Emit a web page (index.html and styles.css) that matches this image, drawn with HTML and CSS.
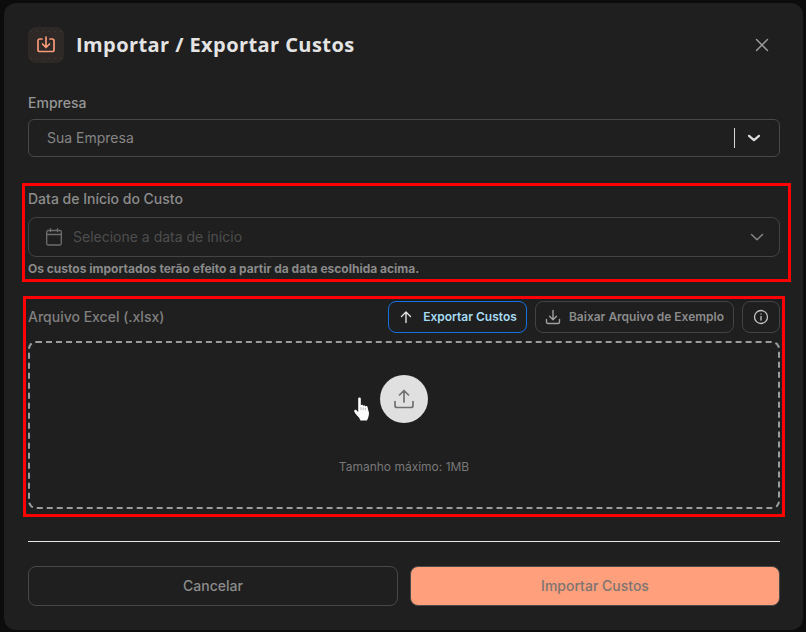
FILE: index.html
```html
<!DOCTYPE html>
<html lang="en">

<head>
    <meta charset="UTF-8" />
    <title>Importar / Exportar Custos</title>
    <link rel="stylesheet" href="styles.css">
</head>

<body>
    <div class="modal">
        <div class="modal-header">
            <div class="header-icon">
                <svg width="20" height="20" viewBox="0 0 20 20" fill="none" stroke="#f79a78" stroke-width="1.700" stroke-linecap="round" stroke-linejoin="round">
                    <path d="M6 4H3.800C2.800 4 2 4.800 2 5.800v8.900c0 1 .8 1.800 1.800 1.800h12.400c1 0 1.800-.8 1.800-1.800V5.800c0-1-.8-1.800-1.800-1.800H14" />
                    <path d="M10 2v10.500M6.500 9l3.500 3.500L13.500 9" />
                </svg>
            </div>
            <h1>Importar / Exportar Custos</h1>
            <button class="close-btn" aria-label="Fechar">
                <svg width="14" height="14" viewBox="0 0 14 14" fill="none" stroke="#a0a0a0" stroke-width="1.400" stroke-linecap="round">
                    <path d="M1.500 1.500l11 11M12.500 1.500l-11 11" />
                </svg>
            </button>
        </div>

        <div class="field-empresa">
            <label class="field-label">Empresa</label>
            <div class="select-box">
                <span class="select-value">Sua Empresa</span>
                <span class="select-sep"></span>
                <svg class="select-arrow" width="14" height="14" viewBox="0 0 14 14" fill="none" stroke="#dcdcdc" stroke-width="2.200" stroke-linecap="round" stroke-linejoin="round">
                    <path d="M2 4.800l5 4.400 5-4.400" />
                </svg>
            </div>
        </div>

        <div class="field-date marked">
            <label class="field-label">Data de Início do Custo</label>
            <div class="date-box">
                <svg width="18" height="18" viewBox="0 0 18 18" fill="none" stroke="#6e6e6e" stroke-width="1.300" stroke-linecap="round">
                    <rect x="1.700" y="2.500" width="14.600" height="14.500" rx="1.500" />
                    <path d="M1.700 6.500h14.600M5.500 .7v3M12.500 .7v3" />
                </svg>
                <span class="date-placeholder">Selecione a data de início</span>
                <svg width="16" height="16" viewBox="0 0 16 16" fill="none" stroke="#8a8a8a" stroke-width="1.400" stroke-linecap="round" stroke-linejoin="round">
                    <path d="M2.500 5.500L8 10.800l5.500-5.300" />
                </svg>
            </div>
            <p class="hint">Os custos importados terão efeito a partir da data escolhida acima.</p>
        </div>

        <div class="field-file marked">
            <div class="file-top">
                <label class="file-label">Arquivo Excel (.xlsx)</label>
                <button class="btn-sm btn-export">
                    <svg width="16" height="16" viewBox="0 0 16 16" fill="none" stroke="#e2e2e2" stroke-width="1.400" stroke-linecap="round" stroke-linejoin="round">
                        <path d="M8 13.500V3M3.500 7.500L8 3l4.500 4.500" />
                    </svg>
                    Exportar Custos
                </button>
                <button class="btn-sm btn-sample">
                    <svg width="16" height="16" viewBox="0 0 16 16" fill="none" stroke="#a0a0a0" stroke-width="1.400" stroke-linecap="round" stroke-linejoin="round">
                        <path d="M8 1.500v9M4.500 7.200L8 10.700l3.500-3.500M1.500 10.500v2.500c0 .8.700 1.500 1.500 1.500h10c.8 0 1.500-.7 1.500-1.500v-2.500" />
                    </svg>
                    Baixar Arquivo de Exemplo
                </button>
                <button class="btn-sm btn-info" aria-label="Informações">
                    <svg width="16" height="16" viewBox="0 0 16 16" fill="none" stroke="#c4c4c4" stroke-width="1.300" stroke-linecap="round">
                        <circle cx="8" cy="8" r="6.500" />
                        <path d="M8 7.500v3.500M8 5v.1" />
                    </svg>
                </button>
            </div>
            <div class="dropzone">
                <div class="upload-circle">
                    <svg width="22" height="22" viewBox="0 0 22 22" fill="none" stroke="#707070" stroke-width="1.700" stroke-linecap="round" stroke-linejoin="round">
                        <path d="M11 14V2.500M6.500 7L11 2.500 15.500 7M2 13.500v4c0 1 .9 2 2 2h14c1.100 0 2-1 2-2v-4" />
                    </svg>
                </div>
                <span class="dropzone-text">Tamanho máximo: 1MB</span>
                <svg class="cursor-hand" width="16" height="24" viewBox="0 0 16 24">
                    <path d="M4.200 1.500C4.200 0 6.800 0 6.800 1.500V8.500C7 7.500 9 7.500 9 8.500V9C9.300 8 11 8 11 9V9.600C11.300 8.800 13.500 8.800 13.500 10L15 16C15 19 14 21 13 23.500H6.500L5 20.500C3 18.500 1 16.500 .3 14.500C0 12.800 1.500 12.200 2.500 13.200L4.200 15Z" fill="#fff" />
                    <path d="M7 10v3M9.200 10.500v2.500M11.300 11v2" stroke="#999" stroke-width=".7" />
                </svg>
            </div>
        </div>

        <hr class="divider" />

        <div class="modal-footer">
            <button class="btn-cancel">Cancelar</button>
            <button class="btn-import">Importar Custos</button>
        </div>
    </div>
</body>

</html>
```

FILE: styles.css
```css
* {
    box-sizing: border-box;
}

body {
    margin: 0;
    padding: 3px 3px 2px 4px;
    height: 632px;
    overflow: hidden;
    font-family: Inter, 'Liberation Sans', sans-serif;
    background: #0c0c0c;
}

button {
    font-family: inherit;
    cursor: pointer;
}

.modal {
    height: 627px;
    padding: 24px 23px 24px 24px;
    background: #1f1f1f;
    border-radius: 12px;
}

/* Header */
.modal-header {
    display: flex;
    align-items: center;
    height: 36px;
}

.header-icon {
    display: flex;
    align-items: center;
    justify-content: center;
    width: 36px;
    height: 36px;
    margin-right: 12px;
    border-radius: 8px;
    background:
        radial-gradient(circle, #393431 0.6px, transparent 1px) 0 3px / 6px 3px repeat-x,
        radial-gradient(circle, #393431 0.6px, transparent 1px) 0 30px / 6px 3px repeat-x,
        #2e2926;
}

h1 {
    flex: 1;
    margin: 0 0 2px;
    font-family: 'Open Sans', sans-serif;
    font-size: 20px;
    font-weight: 700;
    letter-spacing: 0.42px;
    color: #e4e4e4;
}

.close-btn {
    display: flex;
    padding: 0;
    margin-right: 11px;
    background: none;
    border: none;
}

/* Fields */
.field-empresa {
    margin-top: 30px;
}

.field-label {
    display: block;
    font-size: 14px;
    font-weight: 500;
    line-height: 20px;
    color: #969696;
}

.select-box {
    display: flex;
    align-items: center;
    height: 38px;
    margin-top: 6px;
    padding: 0 18px;
    border: 1px solid #484848;
    border-radius: 6px;
}

.select-value {
    flex: 1;
    padding-bottom: 2px;
    font-size: 14px;
    color: #858585;
}

.select-sep {
    width: 1px;
    height: 20px;
    margin-right: 12px;
    background: #d8d8d8;
}

.field-date {
    margin-top: 32px;
}

.field-date .field-label {
    color: #8c8c8c;
}

.date-box {
    display: flex;
    align-items: center;
    gap: 10px;
    height: 40px;
    margin-top: 8px;
    padding: 0 14px 0 16px;
    border: 1px solid #434343;
    border-radius: 8px;
}

.date-placeholder {
    flex: 1;
    padding-bottom: 2px;
    font-size: 14px;
    color: #4e4e4e;
}

.hint {
    margin: 4px 0 0;
    font-size: 12px;
    font-weight: 700;
    line-height: 16px;
    color: #8a8a8a;
}

/* Red marks drawn over the screenshot */
.marked {
    position: relative;
}

.marked::after {
    content: "";
    position: absolute;
    border: 3px solid #fe0000;
    pointer-events: none;
}

.field-date::after {
    inset: -6px -11px -5px -6px;
}

.field-file::after {
    inset: -5px -5px -8px -5px;
}

/* File upload */
.field-file {
    margin-top: 24px;
}

.file-top {
    display: flex;
    align-items: center;
    gap: 8px;
}

.file-label {
    flex: 1;
    padding-bottom: 2px;
    font-size: 14px;
    font-weight: 500;
    color: #808080;
}

.btn-sm {
    display: flex;
    align-items: center;
    justify-content: center;
    height: 32px;
    padding: 0 0 1px;
    font-size: 12px;
    font-weight: 600;
    background: none;
    border-radius: 8px;
}

.btn-export {
    gap: 9px;
    width: 139px;
    color: #a6dcf5;
    border: 1px solid #1570e0;
}

.btn-sample {
    gap: 8px;
    width: 199px;
    color: #8c8c8c;
    border: 1px solid #434343;
}

.btn-info {
    width: 38px;
    border: 1px solid #434343;
}

.dropzone {
    position: relative;
    display: flex;
    flex-direction: column;
    align-items: center;
    height: 168px;
    margin-top: 8px;
    padding-top: 32px;
    border: 2px dashed #9c9c9c;
    border-radius: 8px;
}

.upload-circle {
    display: flex;
    align-items: center;
    justify-content: center;
    width: 48px;
    height: 48px;
    border-radius: 50%;
    background: #e0e0e0;
}

.dropzone-text {
    margin-top: 36px;
    font-size: 12px;
    line-height: 16px;
    color: #787878;
}

.cursor-hand {
    position: absolute;
    left: 324px;
    top: 54px;
}

/* Footer */
.divider {
    height: 1px;
    margin: 32px 0 24px;
    background: #e8e8e8;
    border: none;
}

.modal-footer {
    display: flex;
    gap: 12px;
}

.modal-footer button {
    flex: 1;
    height: 40px;
    padding: 0 0 2px;
    font-size: 14px;
    font-weight: 500;
    border-radius: 8px;
}

.btn-cancel {
    color: #8c8c8c;
    background: none;
    border: 1px solid #484848;
}

.btn-import {
    color: #7c7470;
    background: #ff9f7c;
    border: 1px solid #4a4a4a;
}
```
